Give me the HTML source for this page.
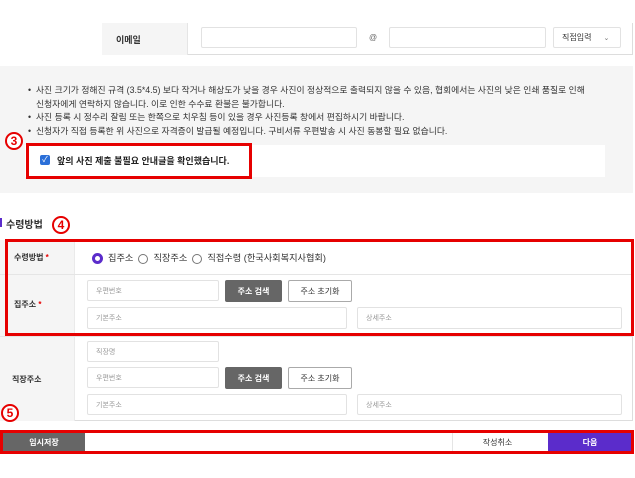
<!DOCTYPE html>
<html><head><meta charset="utf-8"><style>
*{margin:0;padding:0;box-sizing:border-box}
body{width:635px;height:478px;background:#fff;position:relative;overflow:hidden;font-family:"Liberation Sans","Noto Sans CJK KR",sans-serif;color:#333}
.a{position:absolute}
.inp{position:absolute;border:1px solid #e2e2e2;background:#fff;border-radius:2px;font-size:7px;color:#999;padding-left:8px;display:flex;align-items:center}
.lbl{position:absolute;font-size:8px;font-weight:bold;color:#333}
.red{position:absolute;border:3px solid #e60000}
.num{position:absolute;width:18px;height:18px;border:2.5px solid #e60000;border-radius:50%;background:#fff;color:#e60000;font-weight:bold;font-size:12px;display:flex;align-items:center;justify-content:center;line-height:1}
.btnd{position:absolute;background:#666;color:#fff;font-size:8px;font-weight:bold;display:flex;align-items:center;justify-content:center;border-radius:2px}
.btnw{position:absolute;background:#fff;border:1.5px solid #aaa;color:#333;font-size:8px;display:flex;align-items:center;justify-content:center;border-radius:2px}
.bul{font-size:8.8px;color:#333;line-height:13.5px;white-space:nowrap}
.radio{display:inline-block;width:10px;height:10px;border:1px solid #777;border-radius:50%;vertical-align:middle;margin-right:5px;position:relative}
</style></head><body>
<div class="a" style="left:102px;top:23px;width:531px;height:32px;border-bottom:1px solid #ddd;border-right:1px solid #ddd"></div>
<div class="a" style="left:102px;top:23px;width:86px;height:32px;background:#f5f5f5;border-right:1px solid #e5e5e5"></div>
<div class="lbl" style="left:116px;top:33px;font-size:9px">이메일</div>
<div class="inp" style="left:201px;top:27px;width:156px;height:21px"></div>
<div class="a" style="left:369px;top:33px;font-size:8px;color:#666">@</div>
<div class="inp" style="left:389px;top:27px;width:157px;height:21px"></div>
<div class="inp" style="left:553px;top:27px;width:68px;height:21px;color:#333;font-size:8px">직접입력<span style="margin-left:12px;color:#777;font-size:7px">⌄</span></div>
<div class="a" style="left:0;top:66px;width:633px;height:127px;background:#f5f5f5"></div>
<div class="a bul" style="left:28px;top:84px;width:600px">
<div>•&nbsp; 사진 크기가 정해진 규격 (3.5*4.5) 보다 작거나 해상도가 낮을 경우 사진이 정상적으로 출력되지 않을 수 있음, 협회에서는 사진의 낮은 인쇄 품질로 인해</div>
<div style="padding-left:8px">신청자에게 연락하지 않습니다. 이로 인한 수수료 환불은 불가합니다.</div>
<div>•&nbsp; 사진 등록 시 정수리 잘림 또는 한쪽으로 치우침 등이 있을 경우 사진등록 창에서 편집하시기 바랍니다.</div>
<div>•&nbsp; 신청자가 직접 등록한 위 사진으로 자격증이 발급될 예정입니다. 구비서류 우편발송 시 사진 동봉할 필요 없습니다.</div>
</div>
<div class="a" style="left:25px;top:145px;width:580px;height:32px;background:#fff"></div>
<div class="red" style="left:26px;top:143px;width:226px;height:36px"></div>
<div class="a" style="left:40px;top:155px;width:10px;height:10px;background:#2b6fd8;border-radius:2px;color:#fff;font-size:8px;line-height:10px;text-align:center">✓</div>
<div class="a" style="left:57px;top:154px;font-size:9px;font-weight:bold;color:#222">앞의 사진 제출 불필요 안내글을 확인했습니다.</div>
<div class="num" style="left:5px;top:132px">3</div>
<div class="a" style="left:0;top:218px;width:2px;height:9px;background:#5b2ccb"></div>
<div class="a" style="left:6px;top:216px;font-size:10px;font-weight:bold;color:#333">수령방법</div>
<div class="num" style="left:52px;top:216px">4</div>
<div class="a" style="left:0;top:240px;width:633px;height:181px;border-bottom:1px solid #ddd;border-right:1px solid #ddd"></div>
<div class="a" style="left:0;top:240px;width:75px;height:181px;background:#f5f5f5;border-right:1px solid #eaeaea"></div>
<div class="a" style="left:0;top:274px;width:633px;height:1px;background:#e5e5e5"></div>
<div class="a" style="left:0;top:336px;width:633px;height:1px;background:#e5e5e5"></div>
<div class="lbl" style="left:14px;top:252px">수령방법 <span style="color:#e60000">*</span></div>
<div class="a" style="left:92px;top:250px;font-size:9.2px;color:#333">
<span class="radio" style="border:3px solid #5b2ccb;width:11px;height:11px"></span>집주소&nbsp;
<span class="radio"></span>직장주소&nbsp;
<span class="radio"></span>직접수령 (한국사회복지사협회)</div>
<div class="lbl" style="left:14px;top:299px">집주소 <span style="color:#e60000">*</span></div>
<div class="inp" style="left:87px;top:280px;width:132px;height:21px">우편번호</div>
<div class="btnd" style="left:225px;top:280px;width:57px;height:22px">주소 검색</div>
<div class="btnw" style="left:288px;top:280px;width:64px;height:22px">주소 초기화</div>
<div class="inp" style="left:87px;top:307px;width:260px;height:22px">기본주소</div>
<div class="inp" style="left:357px;top:307px;width:265px;height:22px">상세주소</div>
<div class="red" style="left:5px;top:239px;width:629px;height:97px"></div>
<div class="lbl" style="left:12px;top:374px">직장주소</div>
<div class="inp" style="left:87px;top:341px;width:132px;height:21px">직장명</div>
<div class="inp" style="left:87px;top:367px;width:132px;height:21px">우편번호</div>
<div class="btnd" style="left:225px;top:367px;width:57px;height:22px">주소 검색</div>
<div class="btnw" style="left:288px;top:367px;width:64px;height:22px">주소 초기화</div>
<div class="inp" style="left:87px;top:394px;width:260px;height:21px">기본주소</div>
<div class="inp" style="left:357px;top:394px;width:265px;height:21px">상세주소</div>
<div class="num" style="left:1px;top:404px">5</div>
<div class="a" style="left:3px;top:432px;width:82px;height:20px;background:#666;color:#fff;font-size:8px;font-weight:bold;display:flex;align-items:center;justify-content:center">임시저장</div>
<div class="a" style="left:452px;top:432px;width:90px;height:20px;border-left:1px solid #e5e5e5;font-size:8px;display:flex;align-items:center;justify-content:center">작성취소</div>
<div class="a" style="left:548px;top:432px;width:84px;height:20px;background:#5b2ccb;color:#fff;font-size:8px;font-weight:bold;display:flex;align-items:center;justify-content:center">다음</div>
<div class="red" style="left:0;top:430px;width:634px;height:24px"></div>
</body></html>
